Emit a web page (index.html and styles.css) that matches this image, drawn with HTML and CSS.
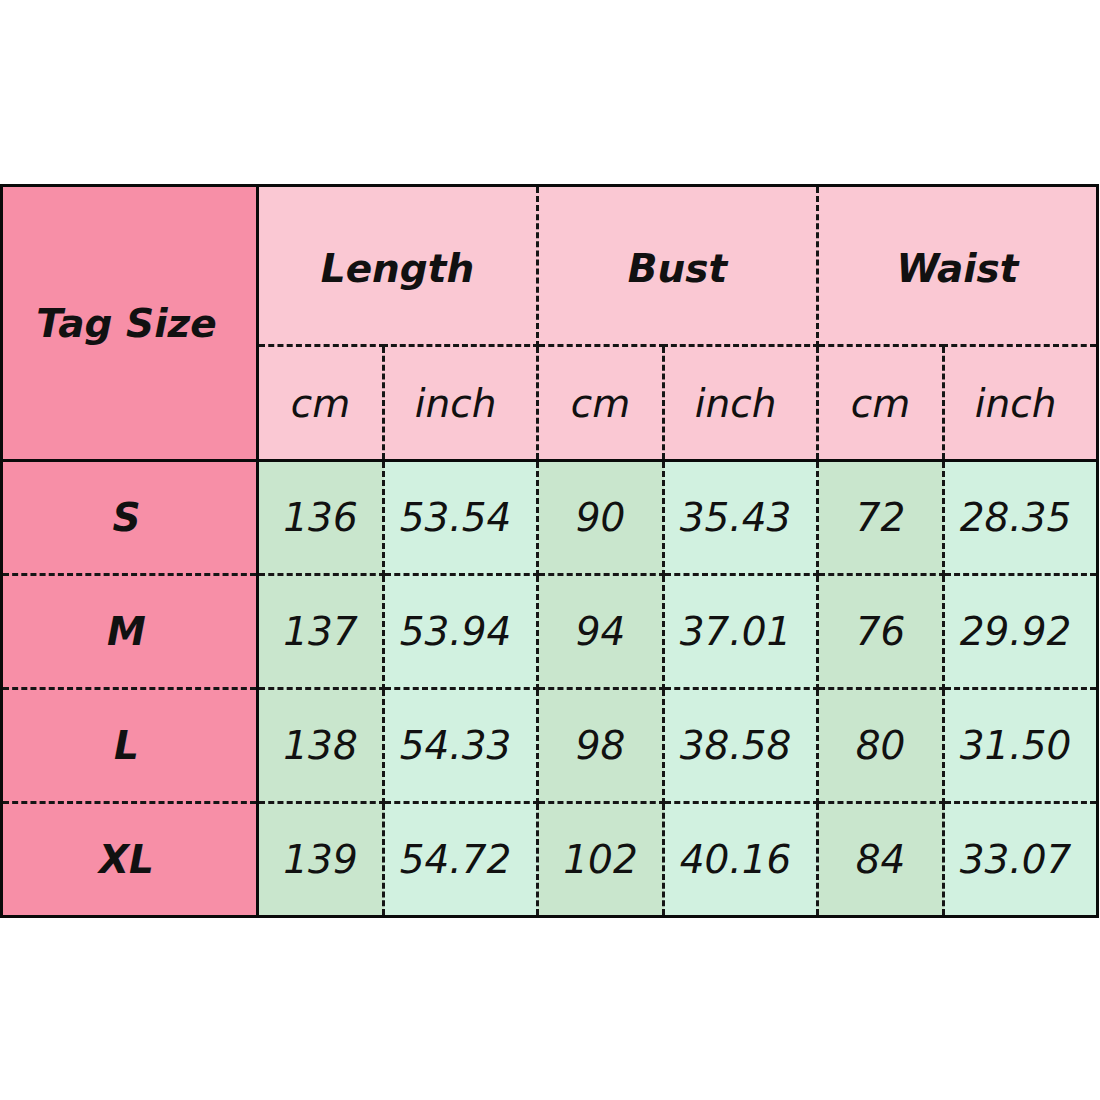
FILE: index.html
```html
<!DOCTYPE html>
<html>
<head>
<meta charset="utf-8">
<link rel="stylesheet" href="styles.css">
</head>
<body>
<table class="chart">
  <colgroup>
    <col class="c-tag"><col class="c-cm"><col class="c-in"><col class="c-cm"><col class="c-in"><col class="c-cm"><col class="c-in">
  </colgroup>
  <tr class="h1">
    <th rowspan="2" class="tag">Tag Size</th>
    <th colspan="2" class="grp">Length</th>
    <th colspan="2" class="grp">Bust</th>
    <th colspan="2" class="grp">Waist</th>
  </tr>
  <tr class="h2">
    <td class="unit">cm</td><td class="unit u-in">inch</td>
    <td class="unit">cm</td><td class="unit u-in">inch</td>
    <td class="unit">cm</td><td class="unit u-in">inch</td>
  </tr>
  <tr class="row first">
    <th class="tag">S</th>
    <td class="cm">136</td><td class="in">53.54</td>
    <td class="cm">90</td><td class="in">35.43</td>
    <td class="cm">72</td><td class="in">28.35</td>
  </tr>
  <tr class="row">
    <th class="tag">M</th>
    <td class="cm">137</td><td class="in">53.94</td>
    <td class="cm">94</td><td class="in">37.01</td>
    <td class="cm">76</td><td class="in">29.92</td>
  </tr>
  <tr class="row">
    <th class="tag">L</th>
    <td class="cm">138</td><td class="in">54.33</td>
    <td class="cm">98</td><td class="in">38.58</td>
    <td class="cm">80</td><td class="in">31.50</td>
  </tr>
  <tr class="row">
    <th class="tag">XL</th>
    <td class="cm">139</td><td class="in">54.72</td>
    <td class="cm">102</td><td class="in">40.16</td>
    <td class="cm">84</td><td class="in">33.07</td>
  </tr>
</table>
</body>
</html>
```

FILE: styles.css
```css
html, body {
  margin: 0;
  padding: 0;
  background: #ffffff;
}
body {
  padding-top: 184px;
}
.chart {
  width: 1099px;
  border-collapse: collapse;
  table-layout: fixed;
  border: 3px solid #0a0a0a;
  font-family: "DejaVu Sans", Verdana, sans-serif;
  color: #111;
}
.c-tag { width: 256px; }
.c-cm { width: 126px; }
.c-in { width: 154px; }
.chart th, .chart td {
  text-align: center;
  vertical-align: middle;
  padding: 0;
  border: 3px dashed #151515;
  font-style: italic;
}
.chart th {
  font-weight: bold;
  font-size: 39px;
}
.chart td {
  font-weight: normal;
  font-size: 39px;
}
.tag {
  background: #f78fa7;
  border-right: 3px solid #0a0a0a !important;
  padding-right: 6px !important;
}
.grp {
  background: #fac8d3;
  padding-top: 5px !important;
}
.unit {
  background: #fac8d3;
}
.u-in, .in {
  padding-right: 10px !important;
}
.h1 { height: 160px; }
.h2 { height: 115px; }
.h2 td { border-bottom: 3px solid #0a0a0a; }
.h1 .tag { border-bottom: 3px solid #0a0a0a; }
.row { height: 114px; }
.cm { background: #c9e6cd; }
.in { background: #d1f1e0; }
```
